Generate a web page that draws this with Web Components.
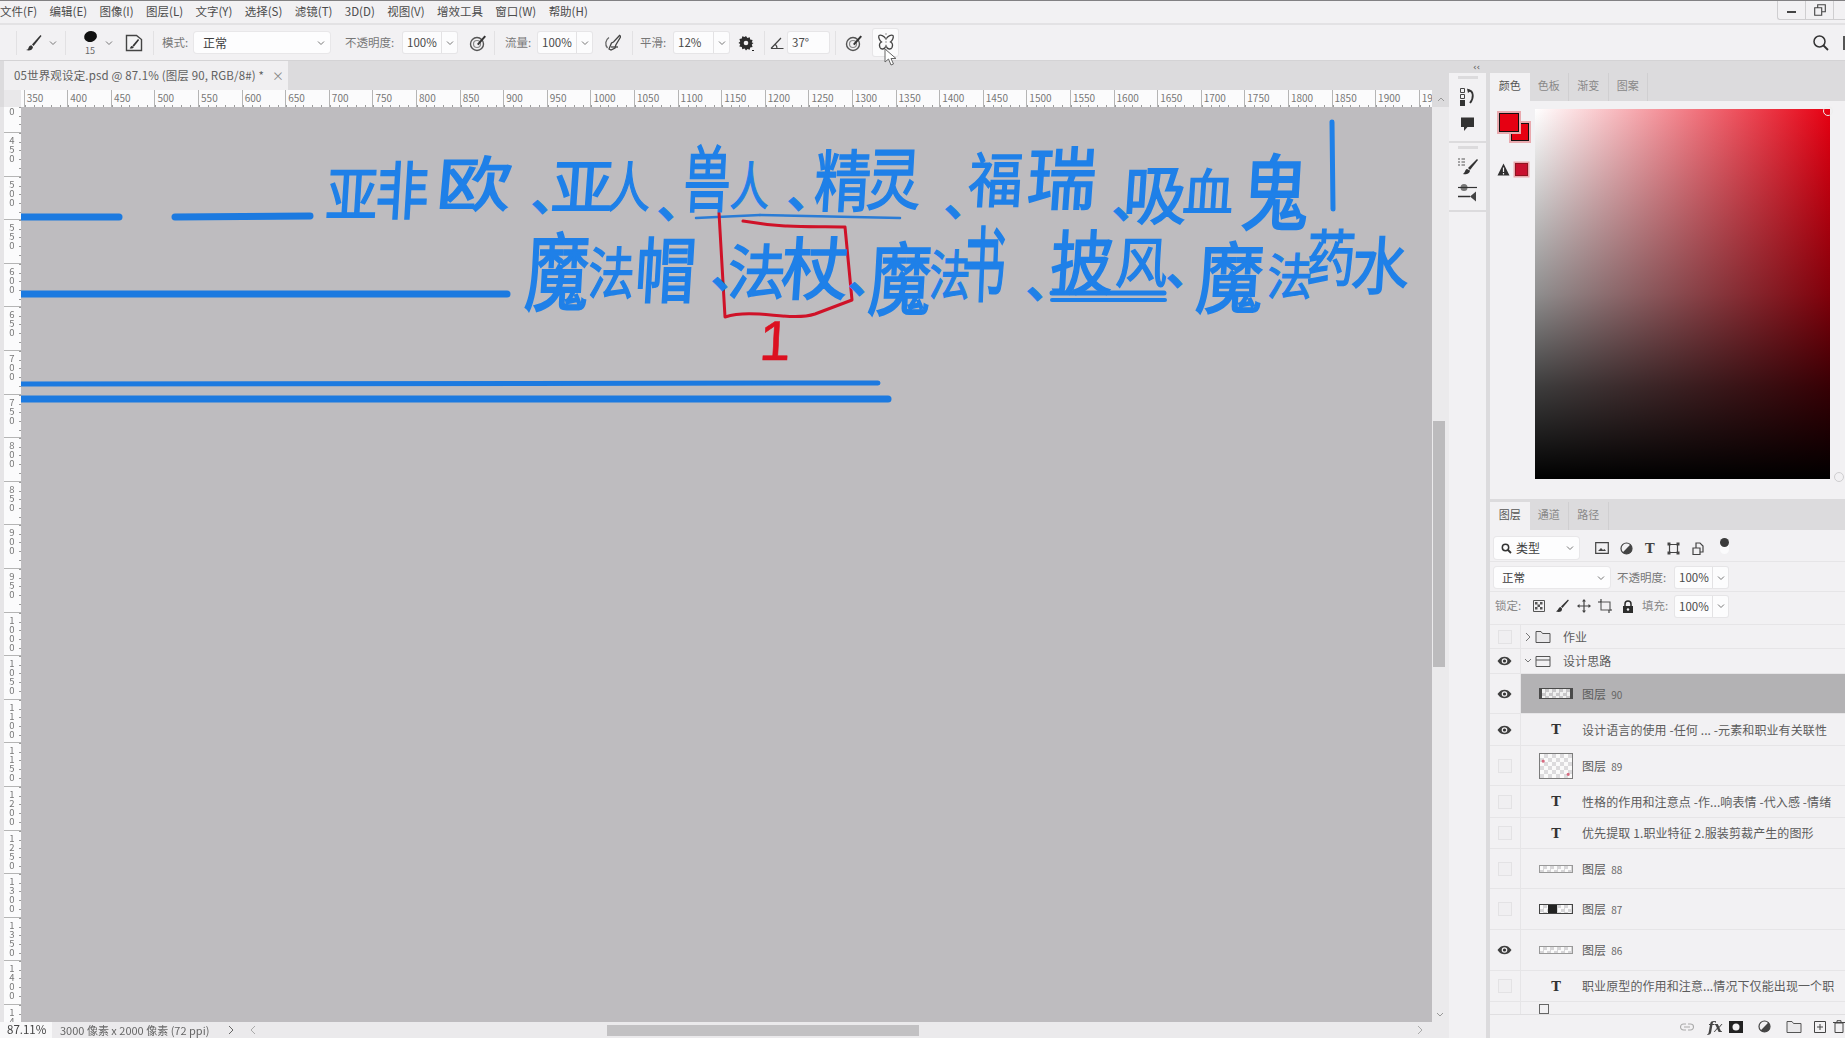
<!DOCTYPE html>
<html lang="zh">
<head>
<meta charset="utf-8">
<title>05世界观设定.psd</title>
<style>
  html, body { margin: 0; height: 100%; overflow: hidden; background: #f2f1f3; }
  body { font-family: "Noto Sans CJK SC", "Noto Sans", sans-serif; color: #555; }
</style>
</head>
<body>
<ps-app></ps-app>
<script>
/* ── shared bits ── */
const FONT = `"Noto Sans CJK SC", "Noto Sans", sans-serif`;
const svg = (w, h, body, extra = "") =>
	`<svg xmlns="http://www.w3.org/2000/svg" width="${w}" height="${h}" viewBox="0 0 ${w} ${h}" ${extra}>${body}</svg>`;

const ICONS = {
	chev: svg(8, 8, `<path d="M1 2.5 4 5.5 7 2.5" fill="none" stroke="#777" stroke-width="1"/>`),
	brush: svg(18, 18, `<path d="M16.5 1 8 10.5l1.6 1.6L17.5 2z" fill="#333"/><path d="M7.4 11.2c-2.4.2-2.6 2-3.1 3.2-.3.8-1.2 1.3-2.3 1.6 2.6 1 6.6.6 7-3z" fill="#333"/>`),
	preset: svg(18, 18, `<path d="M1.5 1.5h10l5 4v11h-15z" fill="#f4f4f5" stroke="#444" stroke-width="1.4"/><path d="M13 5 7.5 11.5l1.3 1.2L14.2 6z" fill="#333"/><path d="M7 12c-1.5.2-1.5 1.5-2.3 2.5 2 .2 4-.2 4-1.5z" fill="#333"/>`),
	pressure: svg(18, 18, `<circle cx="8" cy="10" r="6.5" fill="none" stroke="#555" stroke-width="1.4"/><circle cx="8" cy="10" r="3.5" fill="none" stroke="#888" stroke-width="1.2"/><path d="M8 10 15.5 1.5l1.5 1.2-7.5 8.5z" fill="#333"/>`),
	air: svg(18, 18, `<path d="M6 3.5A7 7 0 0 0 4.5 14" fill="none" stroke="#666" stroke-width="1.3"/><path d="M16.5 1.5 10.5 8l-2 1-2.500 6 2 1 4-2 .8-3 5-8.500z" fill="none" stroke="#444" stroke-width="1.3"/><path d="M8 13h7" stroke="#444" stroke-width="1.3"/>`),
	gear: svg(18, 18, `<path d="M9 2l1.4 2 2.3-.8.5 2.4 2.4.5-.8 2.300L16.5 9l-1.700 1.600.8 2.300-2.400.5-.5 2.400-2.300-.8L9 16.5l-1.400-2-2.300.8-.5-2.400-2.400-.5.8-2.300L1.500 9l1.700-1.600-.8-2.300 2.400-.5.5-2.400 2.300.8z" fill="#2c2c2c"/><circle cx="9" cy="9" r="2.3" fill="#f2f1f3"/><path d="M15 16.500h2" stroke="#222"/>`),
	angle: svg(14, 14, `<path d="M1 12.5h12.5M1 12.5 11 2M7 12.5c0-2-.8-3.400-2-4.500" fill="none" stroke="#444" stroke-width="1.2"/>`),
	butterfly: svg(18, 20, `<path d="M9 6C7 2.500 3.500 1.500 2 2.500c-1 1.500.5 5 2.500 6.500C2.500 10 2 12 3 14.500c1 2 4.500 2.500 6-1.500 1.500 4 5 3.500 6 1.500 1-2.500.5-4.500-1.500-5.500C15.500 7.500 17 4 16 2.500 14.500 1.500 11 2.500 9 6z" fill="none" stroke="#444" stroke-width="1.3"/><path d="M9 0v20" stroke="#9a9a9a" stroke-width="1" stroke-dasharray="2 2"/>`),
	search: svg(18, 18, `<circle cx="7.5" cy="7.5" r="5.5" fill="none" stroke="#333" stroke-width="1.5"/><path d="M11.5 11.5 16 16" stroke="#333" stroke-width="1.8"/>`),
	eye: svg(15, 10, `<path d="M.5 5C3 1.500 5 .7 7.500.7S12 1.500 14.500 5C12 8.500 10 9.300 7.500 9.300S3 8.500.5 5z" fill="#3f3f3f"/><circle cx="7.5" cy="5" r="2.8" fill="#f2f1f3"/><circle cx="7.5" cy="5" r="1.6" fill="#333"/>`),
	folder: svg(16, 13, `<path d="M1 1.500h5l1.500 2H15v9H1z" fill="#e9e8ea" stroke="#555" stroke-width="1"/>`),
	folderOpen: svg(16, 13, `<path d="M1 1.500h14v10H1zM1 5h14" fill="none" stroke="#555" stroke-width="1"/>`),
	history: svg(22, 22, `<path d="M3.500 1.500h4v4h-4zM3.500 7.500h4v4h-4z" fill="none" stroke="#444"/><path d="M3 13h5v6H3z" fill="#333"/><path d="M11 3c6 1 6 8 2 13" fill="none" stroke="#333" stroke-width="1.8"/><path d="M10 1.500 14 3.500 11 6z" fill="#333"/>`),
	comment: svg(16, 16, `<path d="M1 1.500h13v9.500H7.500L4 15v-4H1z" fill="#333"/>`),
	brushes: svg(22, 22, `<path d="M1 4h2M4.500 4H8M1 7h2M4.500 7H8M1 10h2M4.500 10H8" stroke="#555"/><path d="M20 4 11 13l2 2 8-10z" fill="#333"/><path d="M10 14c-2 .5-1.500 3-4 5 3 1 7-.5 7-3.500z" fill="#333"/>`),
	sliders: svg(22, 20, `<circle cx="7" cy="4.5" r="3.5" fill="#777"/><path d="M1 4.500h19" stroke="#333" stroke-width="1.2"/><path d="M1 13.500h12" stroke="#333" stroke-width="1.5"/><path d="M13 13.500l6-5v10z" fill="#444"/>`),
	warn: svg(13, 13, `<path d="M6.500.5 12.500 12.500H.5z" fill="#2f2f2f"/><path d="M6.500 4.500v4.500M6.500 10v1.400" stroke="#f2f1f3" stroke-width="1.2"/>`),
	glass: svg(11, 11, `<circle cx="4.5" cy="4.5" r="3.2" fill="none" stroke="#333" stroke-width="1.5"/><path d="M7 7l3 3" stroke="#333" stroke-width="1.8"/>`),
	fImage: svg(14, 12, `<path d="M.7.7h12.600v10.600H.7z" fill="none" stroke="#444" stroke-width="1.2"/><path d="M3 9l3-3 2 2 1.500-1L11 9z" fill="#444"/>`),
	fAdj: svg(13, 13, `<circle cx="6.5" cy="6.5" r="5.5" fill="none" stroke="#444" stroke-width="1.2"/><path d="M6.500 1a5.500 5.500 0 0 1 0 11z" fill="#444" transform="rotate(45 6.5 6.5)"/>`),
	fShape: svg(13, 13, `<path d="M2.500 2.500h8v8h-8z" fill="none" stroke="#444" stroke-width="1.2"/><path d="M.5.500h3v3h-3zM9.500.500h3v3h-3zM.5 9.500h3v3h-3zM9.500 9.500h3v3h-3z" fill="#444"/>`),
	fSmart: svg(12, 13, `<path d="M1 6h7v6.500H1z" fill="none" stroke="#444" stroke-width="1.2"/><path d="M4 6V1h4l3 3v6H8" fill="none" stroke="#444" stroke-width="1.2"/>`),
	lockPx: svg(12, 12, `<path d="M.5.500h11v11H.5z" fill="none" stroke="#555"/><path d="M2 2h2.500v2.500H2zM7 2h2.500v2.500H7zM4.500 4.500H7V7H4.500zM2 7h2.500v2.500H2zM7 7h2.500v2.500H7z" fill="#555"/>`),
	lockBrush: svg(14, 14, `<path d="M13 .5 6 7.500l1.400 1.400L13.800 1.500z" fill="#333"/><path d="M5.500 8c-2 .3-1.500 2.500-4.500 4.500 3 1 6.500.5 6-3z" fill="#333"/>`),
	lockMove: svg(14, 14, `<path d="M7 1v12M1 7h12" stroke="#444" stroke-width="1.2"/><path d="M7 0 5 2.500h4zM7 14l-2-2.500h4zM0 7l2.500-2v4zM14 7l-2.500-2v4z" fill="#444"/>`),
	lockArt: svg(14, 14, `<path d="M3 3h9v8H3z" fill="none" stroke="#555" stroke-width="1.1"/><path d="M0 3h3M12 11h2M3 0v3M11 11v3" stroke="#333" stroke-width="1.1"/>`),
	lock: svg(12, 13, `<path d="M3 6V4a3 3 0 0 1 6 0v2" fill="none" stroke="#2c2c2c" stroke-width="1.5"/><path d="M1 6h10v7H1z" fill="#2c2c2c"/><circle cx="6" cy="9.5" r="1.2" fill="#f2f1f3"/>`),
	link: svg(14, 8, `<path d="M6 1H3.500a3 3 0 0 0 0 6H6M8 1h2.500a3 3 0 0 1 0 6H8M4 4h6" fill="none" stroke="#aaa" stroke-width="1.1"/>`),
	mask: svg(14, 12, `<path d="M0 0h14v12H0z" fill="#222"/><circle cx="7" cy="6" r="3.5" fill="#f2f1f3"/>`),
	newLayer: svg(12, 12, `<path d="M.5.500h11v11H.5z" fill="none" stroke="#444"/><path d="M6 3v6M3 6h6" stroke="#444"/>`),
	trash: svg(12, 13, `<path d="M2 3h8v9.500H2zM0 2.500h12M4 2.500V.7h4v1.800" fill="none" stroke="#444"/>`),
	minus: svg(12, 10, `<path d="M1 7h9" stroke="#444" stroke-width="2"/>`),
	restore: svg(12, 12, `<path d="M.7 3.700h7v7.600h-7zM3.700 3.500V.7h7.600v7H8" fill="none" stroke="#444" stroke-width="1.1"/>`),
};

class PsBase extends HTMLElement {
	connectedCallback() {
		if (this.shadowRoot) return;
		const root = this.attachShadow({ mode: "open" });
		root.innerHTML = this.markup();
	}
	attr(name, dflt = "") {
		const v = this.getAttribute(name);
		return v === null ? dflt : v;
	}
}

/* ── top menu ── */
class PsMenubar extends PsBase {
	markup() {
		const items = ["文件(F)", "编辑(E)", "图像(I)", "图层(L)", "文字(Y)", "选择(S)", "滤镜(T)", "3D(D)", "视图(V)", "增效工具", "窗口(W)", "帮助(H)"];
		return `<style>
			:host { display: flex; align-items: center; box-sizing: border-box; height: 25px; gap: 12.4px;
				background: #f2f1f3; border-top: 1px solid #828183; border-bottom: 2px solid #e3e2e4;
				font: 11.5px/1 ${FONT}; color: #4b4b4b; position: relative; white-space: nowrap; }
			span:first-child { margin-left: -2px; }
			.win { margin-left: auto; display: flex; height: 18px; align-self: flex-start; border: 1px solid #cfced0; border-top: 0; border-right: 0; border-radius: 0 0 0 3px; }
			.win i { display: flex; width: 27px; align-items: center; justify-content: center; border-right: 1px solid #cfced0; }
			.win i:last-child { width: 11px; border-right: 0; }
		</style>${items.map(t => `<span>${t}</span>`).join("")}
		<div class="win"><i>${ICONS.minus}</i><i>${ICONS.restore}</i><i></i></div>`;
	}
}

class PsField extends PsBase {
	markup() {
		const chev = this.hasAttribute("chev");
		return `<style>
			:host { display: flex; box-sizing: border-box; height: 21px; background: #fcfcfd; border-radius: 2px;
				box-shadow: 0 0 0 1px #e6e5e7; font: 11.5px/21px ${FONT}; color: #4a4a4a; overflow: hidden; }
			.v { flex: 1; padding-left: 4px; white-space: nowrap; }
			.c { width: 15px; display: flex; align-items: center; justify-content: center; border-left: 1px solid #e3e2e4; }
		</style><div class="v"><slot></slot></div>${chev ? `<div class="c">${ICONS.chev}</div>` : ""}`;
	}
}

class PsSelect extends PsBase {
	markup() {
		return `<style>
			:host { display: flex; align-items: center; box-sizing: border-box; background: #fdfdfe; border-radius: 3px;
				box-shadow: 0 0 0 1px #e8e7e9; font: 12px/1 ${FONT}; color: #3e3e3e; padding: 0 5px 0 9px; white-space: nowrap; }
			.v { flex: 1; display: flex; align-items: center; gap: 4px; }
		</style><div class="v"><slot></slot></div>${ICONS.chev}`;
	}
}

/* ── options bar ── */
class PsOptions extends PsBase {
	markup() {
		return `<style>
			:host { display: flex; align-items: center; box-sizing: border-box; height: 36px; background: #f2f1f3;
				border-bottom: 1px solid #d4d3d5; font: 11.5px/1 ${FONT}; color: #777; white-space: nowrap; }
			.sep { width: 1px; height: 24px; background: #e2e1e3; flex: none; }
			.ic { display: flex; flex: none; }
			.lb { flex: none; }
			.tip { flex: none; width: 18px; margin-left: 15px; display: flex; flex-direction: column; align-items: center; color: #666; font-size: 9px; }
			.dot { width: 13px; height: 11px; border-radius: 50%; background: #111; transform: rotate(-18deg); margin-bottom: 4px; }
			.btn { flex: none; width: 25px; height: 27px; margin-left: 10px; display: flex; align-items: center; justify-content: center; background: #fbfbfc; box-shadow: 0 0 0 1px #e6e5e7; border-radius: 2px; }
		</style>
		<span class="sep" style="margin-left:16px"></span>
		<span class="ic" style="margin-left:7px">${ICONS.brush}</span>
		<span class="ic" style="margin-left:7px">${ICONS.chev}</span>
		<span class="sep" style="margin-left:8px"></span>
		<div class="tip"><div class="dot"></div>15</div>
		<span class="ic" style="margin-left:6px">${ICONS.chev}</span>
		<span class="ic" style="margin-left:12px">${ICONS.preset}</span>
		<span class="sep" style="margin-left:10px"></span>
		<span class="lb" style="margin-left:8px;width:29px">模式:</span>
		<ps-select style="margin-left:3px;width:136px;height:21px">正常</ps-select>
		<span class="lb" style="margin-left:15px;width:54px">不透明度:</span>
		<ps-field chev style="margin-left:4px;width:54px">100%</ps-field>
		<span class="ic" style="margin-left:12px">${ICONS.pressure}</span>
		<span class="sep" style="margin-left:7px"></span>
		<span class="lb" style="margin-left:10px;width:30px">流量:</span>
		<ps-field chev style="margin-left:3px;width:54px">100%</ps-field>
		<span class="ic" style="margin-left:11px">${ICONS.air}</span>
		<span class="sep" style="margin-left:11px"></span>
		<span class="lb" style="margin-left:7px;width:31px">平滑:</span>
		<ps-field chev style="margin-left:3px;width:55px">12%</ps-field>
		<span class="ic" style="margin-left:8px">${ICONS.gear}</span>
		<span class="sep" style="margin-left:9px"></span>
		<span class="ic" style="margin-left:5px">${ICONS.angle}</span>
		<ps-field style="margin-left:4px;width:41px">37°</ps-field>
		<span class="sep" style="margin-left:6px"></span>
		<span class="ic" style="margin-left:9px">${ICONS.pressure}</span>
		<div class="btn">${ICONS.butterfly}</div>
		<span class="ic" style="margin-left:auto">${ICONS.search}</span>
		<span class="sep" style="margin:0 0 0 13px;height:14px;width:2px;background:#555"></span>
		`;
	}
}

/* ── document tab ── */
class PsDocTab extends PsBase {
	markup() {
		return `<style>
			:host { display: flex; box-sizing: border-box; height: 29px; padding-left: 4px; background: #dcdbdd; font: 11.5px/1 ${FONT}; color: #5f5f5f; white-space: nowrap; letter-spacing: .15px; }
			.t { width: 284px; box-sizing: border-box; padding-left: 10px; display: flex; align-items: center; background: #f0eff1; }
			.x { margin-left: 8px; color: #888; font-size: 12px; }
		</style><div class="t"><slot></slot><span class="x">×</span></div>`;
	}
}

/* ── rulers ── */
const TICKS_H = `repeating-linear-gradient(90deg, #9b9b9b 0 1px, transparent 1px 8.72px) bottom left / 100% 2px no-repeat`;
class PsRulerH extends PsBase {
	markup() {
		let cells = "";
		for (let n = 350; n <= 1950; n += 50) cells += `<div class="c"><span>${n}</span></div>`;
		return `<style>
			:host { display: flex; box-sizing: border-box; height: 17px; background: #dcdbdd; padding-left: 4px; font: 10px/1 ${FONT}; color: #777; }
			.corner { flex: 0 0 17px; background: #e9e8ea; }
			.r { flex: 0 0 1411px; display: flex; overflow: hidden; background: #fbfbfc; padding-left: 2.7px; box-sizing: border-box; }
			.c { flex: 0 0 43.6px; box-sizing: border-box; border-left: 1px solid #b5b5b5; padding: 3px 0 0 2px; background: ${TICKS_H}; overflow: hidden; }
			.arrow { flex: 1; display: flex; align-items: center; justify-content: center; }
		</style><div class="corner"></div><div class="r">${cells}</div>
		<div class="arrow">${svg(8, 6, `<path d="M1 5 4 2l3 3" fill="none" stroke="#999"/>`)}</div>`;
	}
}

const TICKS_V = `repeating-linear-gradient(180deg, #9b9b9b 0 1px, transparent 1px 8.72px) top right / 2px 100% no-repeat`;
class PsRulerV extends PsBase {
	markup() {
		let cells = `<div class="c" style="flex-basis:25px"><b>0</b></div>`;
		for (let n = 450; n <= 1450; n += 50) cells += `<div class="c"><b>${n}</b></div>`;
		return `<style>
			:host { display: block; box-sizing: border-box; width: 21px; flex: none; background: #e6e5e7; padding-left: 4px; overflow: hidden; }
			.r { display: flex; flex-direction: column; height: 100%; background: #fbfbfc; font: 9.5px/9px ${FONT}; color: #777; overflow: hidden; }
			.c { flex: 0 0 43.6px; box-sizing: border-box; border-top: 1px solid #b5b5b5; padding: 3px 4px 0 5px; background: ${TICKS_V}; overflow: hidden; }
			.c:first-child { border-top: 0; padding-top: 0; }
			/* one digit per line: a box too thin for two */
			b { display: block; font-weight: 400; width: 6px; word-break: break-all; text-align: center; }
		</style><div class="r">${cells}</div>`;
	}
}

/* ── painted strokes on the canvas ── */
const INK = [
	// first line
	["亚", 329, 377, 163, 217], ["非", 379, 428, 157, 215], ["欧", 441, 510, 152, 207],
	["亚", 555, 612, 155, 210], ["人", 610, 650, 158, 208],
	["兽", 687, 730, 140, 207], ["人", 733, 769, 158, 206],
	["精", 818, 870, 145, 207], ["灵", 870, 920, 143, 205],
	["福", 972, 1022, 148, 203], ["瑞", 1031, 1095, 142, 205],
	["吸", 1127, 1186, 160, 220], ["血", 1186, 1233, 165, 212], ["鬼", 1245, 1308, 148, 225],
	// second line
	["魔", 529, 588, 226, 305], ["法", 591, 634, 243, 295], ["帽", 639, 695, 232, 298],
	["法", 731, 785, 240, 295], ["杖", 785, 847, 232, 295],
	["魔", 872, 930, 236, 310], ["法", 932, 970, 246, 296], ["书", 965, 1005, 220, 296],
	["披", 1054, 1112, 225, 290], ["风", 1119, 1167, 233, 284],
	["魔", 1200, 1262, 236, 308], ["法", 1270, 1312, 250, 296], ["药", 1310, 1355, 225, 282], ["水", 1355, 1408, 232, 290],
];
const COMMAS = [[534, 198], [660, 205], [790, 195], [947, 203], [1115, 205], [714, 275], [851, 280], [1029, 285], [1169, 272]];

class PsCanvas extends PsBase {
	markup() {
		const ox = 21, oy = 107;
		const blue = "#1f80e8";
		const line = (x1, y1, x2, y2, w, c = "#1c7ae0") =>
			`<path d="M${x1 - ox} ${y1 - oy}L${x2 - ox} ${y2 - oy}" stroke="${c}" stroke-width="${w}" stroke-linecap="round"/>`;
		const ink = INK.map(([ch, x0, x1, y0, y1]) => {
			const sx = ((x1 - x0) / 37).toFixed(3);
			const sy = ((y1 - y0) / 37).toFixed(3);
			return `<span style="left:${x0 - ox}px;top:${y0 - oy}px;transform:scale(${sx},${sy}) skewX(-4deg)">${ch}</span>`;
		}).join("");
		const commas = COMMAS.map(([x, y]) =>
			`<span class="cm" style="left:${x - ox - 3}px;top:${y - oy - 28}px">、</span>`).join("");
		return `<style>
			:host { display: block; position: relative; flex: 1; background: #bebcbf; overflow: hidden; }
			svg { position: absolute; left: 0; top: 0; }
			span { position: absolute; transform-origin: 0 0; font: 400 40px/40px ${FONT}; -webkit-text-stroke: 1px ${blue}; color: ${blue}; width: 40px; height: 40px; margin: -1.5px 0 0 -1.5px; white-space: nowrap; }
			span.cm { margin: 0; font: 700 44px/44px ${FONT}; }
			span.one { font: 400 56px/56px "Liberation Sans", sans-serif; color: #dc1020; -webkit-text-stroke: .6px #dc1020; margin: 0; width: 30px; height: 56px; transform: skewX(-3deg); }
		</style>
		${svg(1411, 915, `
			${line(21, 217, 119, 217, 7)}
			${line(175, 217, 310, 216, 7)}
			${line(21, 294, 507, 294, 7)}
			${line(21, 384, 878, 383, 5)}
			${line(21, 399, 888, 399, 7)}
			${line(696, 218, 760, 215, 2.5, "#2a7cd6")}
			${line(760, 215, 900, 218, 2.5, "#2a7cd6")}
			${line(1052, 293, 1164, 293, 5, blue)}
			${line(1052, 300, 1165, 300, 4, blue)}
			${line(1332, 122, 1333, 209, 5, blue)}
			<path d="M${719 - ox} ${213 - oy}L${725 - ox} ${317 - oy}C${755 - ox} ${308 - oy} ${790 - ox} ${322 - oy} ${815 - ox} ${314 - oy}L${852 - ox} ${300 - oy}L${845 - ox} ${227 - oy}C${815 - ox} ${226 - oy} ${790 - ox} ${229 - oy} ${743 - ox} ${221 - oy}" fill="none" stroke="#cf1228" stroke-width="3" stroke-linejoin="round" stroke-linecap="round"/>
		`)}
		${ink}${commas}
		<span class="one" style="left:${761 - ox}px;top:${313 - oy}px">1</span>`;
	}
}

class PsScrollV extends PsBase {
	markup() {
		return `<style>
			:host { display: flex; flex-direction: column; justify-content: flex-end; position: relative; flex: 0 0 17px; box-sizing: border-box; background: #ebeaec; padding: 0 0 4px 4px; }
			.thumb { position: absolute; left: 1px; width: 12px; top: 314px; height: 246px; background: #bcbbbd; }
		</style><div class="thumb"></div>${svg(8, 6, `<path d="M1 1l3 3 3-3" fill="none" stroke="#999"/>`)}`;
	}
}

class PsStatus extends PsBase {
	markup() {
		return `<style>
			:host { display: flex; align-items: center; box-sizing: border-box; height: 16px; background: #ebeaec; font: 11.5px/1 ${FONT}; color: #666; white-space: nowrap; }
			.z { width: 52px; height: 100%; box-sizing: border-box; padding-left: 7px; background: #f8f8f9; color: #444; display: flex; align-items: center; }
			.d { margin-left: 8px; width: 167px; font-size: 11px; }
			.track { flex: 1; display: flex; align-items: center; height: 100%; margin-left: 4px; position: relative; }
			.th { position: absolute; left: 368px; width: 312px; top: 3px; height: 11px; background: #c2c1c3; }
			.r { margin-left: auto; margin-right: 25px; display: flex; }
		</style><div class="z">87.11%</div><div class="d">3000 像素 x 2000 像素 (72 ppi)</div>
		${svg(8, 10, `<path d="M2 1l4 4-4 4" fill="none" stroke="#666"/>`)}
		<div class="track"><span style="margin-left:10px;display:flex">${svg(8, 10, `<path d="M6 1 2 5l4 4" fill="none" stroke="#aaa"/>`)}</span><div class="th"></div>
		<span class="r">${svg(8, 10, `<path d="M2 1l4 4-4 4" fill="none" stroke="#aaa"/>`)}</span></div>`;
	}
}

/* ── tool dock, collapsed ── */
class PsDock extends PsBase {
	markup() {
		const grip = `<i class="g"></i>`;
		return `<style>
			:host { display: flex; flex-direction: column; flex: 0 0 37px; background: #dcdbdd; }
			.s { background: #f2f1f3; display: flex; flex-direction: column; align-items: center; margin-bottom: 2px; }
			.g { width: 20px; height: 3px; background: #dcdbdd; margin-top: 3px; }
			.s1 { height: 68px; } .s2 { height: 67px; }
			.s3 { flex: 1; margin: 0; }
			.a { display: flex; }
		</style>
		<div class="s s1">${grip}<span class="a" style="margin-top:8px">${ICONS.history}</span><span class="a" style="margin-top:7px">${ICONS.comment}</span></div>
		<div class="s s2">${grip}<span class="a" style="margin-top:6px">${ICONS.brushes}</span><span class="a" style="margin-top:6px">${ICONS.sliders}</span></div>
		<div class="s s3"></div>`;
	}
}

class PsTabs extends PsBase {
	markup() {
		const active = +this.attr("active", "0");
		const names = this.attr("names").split(",");
		return `<style>
			:host { display: flex; box-sizing: border-box; height: 28px; flex: none; background: #dcdbdd; font: 11px/1 ${FONT}; color: #888; }
			div { width: 39.5px; display: flex; align-items: center; justify-content: center; border-right: 1px solid #d0cfd1; box-sizing: border-box; padding-bottom: 3px; }
			.on { background: #f2f1f3; color: #555; border-right: 0; }
		</style>${names.map((n, i) => `<div class="${i === active ? "on" : ""}">${n}</div>`).join("")}`;
	}
}

/* ── colour panel ── */
class PsColorPanel extends PsBase {
	markup() {
		return `<style>
			:host { display: flex; flex-direction: column; height: 429px; flex: none; box-sizing: border-box; background: #f2f1f3; border-bottom: 3px solid #dcdbdd; position: relative; }
			.b { flex: 1; display: flex; padding-top: 8px; }
			.l { flex: 0 0 45px; position: relative; }
			.fg, .bg { position: absolute; width: 16px; height: 16px; background: #e60012; box-shadow: 0 0 0 1px #111, 0 0 0 3px #e9a9ae; }
			.fg { left: 10px; top: 5px; width: 18px; height: 17px; z-index: 1; }
			.bg { left: 22px; top: 15px; }
			.w { position: absolute; left: 7px; top: 54px; display: flex; align-items: center; gap: 4px; }
			.w i { width: 11px; height: 11px; background: #c8102e; box-shadow: 0 0 0 1px #8e1420, 0 0 0 2.5px #e9a9ae; margin-left: 2px; }
			.f { width: 295px; height: 370px; position: relative; background:
				linear-gradient(180deg, rgba(0,0,0,0), rgba(0,0,0,.44) 50%, rgba(0,0,0,.76) 75%, #000),
				linear-gradient(90deg, #fff, #e60012); }
			.k { position: absolute; right: -3px; top: -3px; width: 8px; height: 8px; border: 1px solid #eee; border-radius: 50%; }
			.hue { position: absolute; left: 344px; top: 399px; width: 8px; height: 8px; border: 1px solid #cfced0; border-radius: 50%; }
		</style>
		<ps-tabs names="颜色,色板,渐变,图案" active="0"></ps-tabs>
		<div class="b">
			<div class="l"><div class="fg"></div><div class="bg"></div><div class="w">${ICONS.warn}<i></i></div></div>
			<div class="f"><div class="k"></div></div>
		</div>
		<div class="hue"></div>`;
	}
}

/* ── layers ── */
class PsLayerRow extends PsBase {
	markup() {
		const h = +this.attr("h", "40");
		const kind = this.attr("kind", "layer");
		const num = this.attr("num");
		const eye = this.hasAttribute("eye");
		const sel = this.hasAttribute("selected");
		const vis = eye ? ICONS.eye : (this.hasAttribute("novis") ? "" : `<i class="box"></i>`);
		let lead = "";
		if (kind === "text") lead = `<b class="T">T</b>`;
		if (kind === "layer") lead = `<i class="th ${this.attr("thumb")}"></i>`;
		if (kind === "group") {
			const open = this.hasAttribute("open");
			lead = `<span class="gc">${svg(8, 10, open ? `<path d="M1 3l3 3 3-3" fill="none" stroke="#777"/>` : `<path d="M2 1l4 4-4 4" fill="none" stroke="#777"/>`)}</span>
				<span class="gf">${open ? ICONS.folderOpen : ICONS.folder}</span>`;
		}
		return `<style>
			:host { display: flex; box-sizing: border-box; height: ${h}px; border-bottom: 1px solid #e6e5e7; font: 12px/1 ${FONT}; color: #5c5c5c; white-space: nowrap; overflow: hidden; }
			.vis { flex: 0 0 31px; display: flex; align-items: center; justify-content: center; box-sizing: border-box; border-right: 1px solid #e6e5e7; padding-right: 1px; }
			.box { width: 12px; height: 12px; background: #f0eff1; box-shadow: 0 0 0 1px #e3e2e4; }
			.m { flex: 1; display: flex; align-items: center; padding-left: ${kind === "group" ? 3 : 18}px; min-width: 0; ${sel ? "background:#b3b2b4;" : ""} }
			.T { width: 34px; text-align: center; font: 700 13px/1 "DejaVu Serif", "Liberation Serif", serif; color: #333; }
			.gc { display: flex; width: 11px; } .gf { display: flex; width: 28px; }
			.n { margin-left: ${kind === "group" ? 0 : 9}px; overflow: hidden; letter-spacing: .1px; }
			.num { font-size: 10px; color: #666; margin-left: 5px; }
			.th { box-sizing: border-box; width: 34px; height: 11px; border: 1px solid #7c7c7c; flex: none;
				background: repeating-conic-gradient(#d7d6d8 0 25%, #fafafa 0 50%) 0 0 / 7px 7px; }
			.tall { height: 26px; background: radial-gradient(circle at 10% 30%, #d76a80 0 1px, transparent 2px), radial-gradient(circle at 88% 85%, #d76a80 0 1px, transparent 2px), repeating-conic-gradient(#dcdbdd 0 25%, #fafafa 0 50%) 0 0 / 8px 8px; }
			.sel { height: 11px; border-width: 1px 3px; border-color: #4a4a4a; background: repeating-conic-gradient(#c8c7c9 0 25%, #f0f0f0 0 50%) 0 0 / 7px 7px; }
			.faint { height: 8px; border-color: #999; }
			.dark { height: 10px; border: 1px solid #444; background: linear-gradient(#222, #222) 35% 50% / 9px 100% no-repeat, repeating-conic-gradient(#d7d6d8 0 25%, #fafafa 0 50%) 0 0 / 7px 7px; }
			.smart { width: 10px; height: 10px; border-color: #666; background: #f2f1f3; }
		</style><div class="vis">${vis}</div><div class="m">${lead}<span class="n"><slot></slot>${num ? `<span class="num">${num}</span>` : ""}</span></div>`;
	}
}

class PsLayersPanel extends PsBase {
	markup() {
		return `<style>
			:host { display: flex; flex-direction: column; flex: 1; min-height: 0; background: #f2f1f3; font: 11.5px/1 ${FONT}; color: #777; position: relative; overflow: hidden; }
			.row { display: flex; align-items: center; box-sizing: border-box; padding-left: 4px; white-space: nowrap; flex: none; border-bottom: 1px solid #e6e5e7; }
			.ic { display: flex; flex: none; }
			.tog { position: relative; width: 9px; height: 16px; border-radius: 5px; background: #fbfbfc; margin-left: 16px; margin-top: -4px; }
			.tog i { position: absolute; left: 0; top: 0; width: 9px; height: 9px; border-radius: 50%; background: #3c3c3c; }
			.list { flex: 1; min-height: 0; overflow: hidden; }
			.foot { position: absolute; left: 0; right: 0; bottom: 0; height: 24px; background: #f2f1f3; border-top: 1px solid #e0dfe1; display: flex; align-items: center; padding-left: 190px; box-sizing: border-box; }
			.fx { font: italic 700 14px/1 "DejaVu Serif", serif; color: #444; margin-left: 14px; width: 18px; }
		</style>
		<ps-tabs names="图层,通道,路径" active="0"></ps-tabs>
		<div class="row" style="height:32px;padding-top:5px">
			<ps-select style="width:85px;height:22px;padding-left:7px">${ICONS.glass}类型</ps-select>
			<span class="ic" style="margin-left:16px">${ICONS.fImage}</span>
			<span class="ic" style="margin-left:11px">${ICONS.fAdj}</span>
			<b class="ic" style="margin-left:12px;font:700 13px/1 'DejaVu Serif',serif;color:#444">T</b>
			<span class="ic" style="margin-left:12px">${ICONS.fShape}</span>
			<span class="ic" style="margin-left:12px">${ICONS.fSmart}</span>
			<div class="tog"><i></i></div>
		</div>
		<div class="row" style="height:30px;padding-top:2px">
			<ps-select style="width:116px;height:21px;padding-left:8px;font-size:11.5px">正常</ps-select>
			<span style="margin-left:7px;width:58px;flex:none">不透明度:</span>
			<ps-field chev style="width:53px">100%</ps-field>
		</div>
		<div class="row" style="height:33px;padding:0 0 4px 5px">
			<span style="width:38px;flex:none;color:#888">锁定:</span>
			<span class="ic">${ICONS.lockPx}</span>
			<span class="ic" style="margin-left:10px">${ICONS.lockBrush}</span>
			<span class="ic" style="margin-left:8px">${ICONS.lockMove}</span>
			<span class="ic" style="margin-left:7px">${ICONS.lockArt}</span>
			<span class="ic" style="margin-left:10px">${ICONS.lock}</span>
			<span style="margin-left:8px;width:31px;flex:none;color:#888">填充:</span>
			<ps-field chev style="margin-left:2px;width:53px">100%</ps-field>
		</div>
		<div class="list">
			<ps-layer-row kind="group" h="24">作业</ps-layer-row>
			<ps-layer-row kind="group" h="25" eye open>设计思路</ps-layer-row>
			<ps-layer-row kind="layer" h="40" eye selected thumb="sel" num="90">图层</ps-layer-row>
			<ps-layer-row kind="text" h="32" eye>设计语言的使用 -任何 ... -元素和职业有关联性</ps-layer-row>
			<ps-layer-row kind="layer" h="40" thumb="tall" num="89">图层</ps-layer-row>
			<ps-layer-row kind="text" h="32">性格的作用和注意点 -作...响表情 -代入感 -情绪</ps-layer-row>
			<ps-layer-row kind="text" h="31">优先提取 1.职业特征 2.服装剪裁产生的图形</ps-layer-row>
			<ps-layer-row kind="layer" h="40" thumb="faint" num="88">图层</ps-layer-row>
			<ps-layer-row kind="layer" h="41" thumb="dark" num="87">图层</ps-layer-row>
			<ps-layer-row kind="layer" h="41" eye thumb="faint" num="86">图层</ps-layer-row>
			<ps-layer-row kind="text" h="31">职业原型的作用和注意...情况下仅能出现一个职</ps-layer-row>
			<ps-layer-row kind="layer" h="14" novis thumb="smart"></ps-layer-row>
		</div>
		<div class="foot">
			<span class="ic">${ICONS.link}</span>
			<span class="fx">fx</span>
			<span class="ic" style="margin-left:7px">${ICONS.mask}</span>
			<span class="ic" style="margin-left:15px">${ICONS.fAdj}</span>
			<span class="ic" style="margin-left:15px">${ICONS.folder}</span>
			<span class="ic" style="margin-left:12px">${ICONS.newLayer}</span>
			<span class="ic" style="margin-left:7px">${ICONS.trash}</span>
		</div>`;
	}
}

/* ── whole window ── */
class PsApp extends PsBase {
	markup() {
		return `<style>
			:host { display: flex; flex-direction: column; width: 1845px; height: 1038px; position: relative; overflow: hidden; filter: blur(.35px); }
			.main { flex: 1; display: flex; min-height: 0; }
			.doc { flex: 0 0 1449px; display: flex; flex-direction: column; min-width: 0; }
			.work { flex: 1; display: flex; min-height: 0; }
			.side { flex: 1; display: flex; flex-direction: column; background: #dcdbdd; min-width: 0; }
			.strip { height: 12px; flex: none; display: flex; align-items: center; padding-left: 24px; color: #555; font: 9px/1 "DejaVu Sans", sans-serif; }
			.cols { flex: 1; display: flex; min-height: 0; }
			.panels { flex: 1; margin-left: 4px; display: flex; flex-direction: column; min-width: 0; }
			.cursor { position: absolute; left: 884px; top: 47px; }
		</style>
		<ps-menubar></ps-menubar>
		<ps-options></ps-options>
		<div class="main">
			<div class="doc">
				<ps-doc-tab>05世界观设定.psd @ 87.1% (图层 90, RGB/8#) *</ps-doc-tab>
				<ps-ruler-h></ps-ruler-h>
				<div class="work"><ps-ruler-v></ps-ruler-v><ps-canvas></ps-canvas><ps-scroll-v></ps-scroll-v></div>
				<ps-status></ps-status>
			</div>
			<div class="side">
				<div class="strip">‹‹</div>
				<div class="cols">
					<ps-dock></ps-dock>
					<div class="panels"><ps-color-panel></ps-color-panel><ps-layers-panel></ps-layers-panel></div>
				</div>
			</div>
		</div>
		<div class="cursor">${svg(14, 18, `<path d="M1 1v13l3.5-3 2.5 6 2.5-1-2.5-5.5H12z" fill="#fff" stroke="#666" stroke-width="1"/>`)}</div>`;
	}
}

customElements.define("ps-menubar", PsMenubar);
customElements.define("ps-field", PsField);
customElements.define("ps-select", PsSelect);
customElements.define("ps-options", PsOptions);
customElements.define("ps-doc-tab", PsDocTab);
customElements.define("ps-ruler-h", PsRulerH);
customElements.define("ps-ruler-v", PsRulerV);
customElements.define("ps-canvas", PsCanvas);
customElements.define("ps-scroll-v", PsScrollV);
customElements.define("ps-status", PsStatus);
customElements.define("ps-dock", PsDock);
customElements.define("ps-tabs", PsTabs);
customElements.define("ps-color-panel", PsColorPanel);
customElements.define("ps-layer-row", PsLayerRow);
customElements.define("ps-layers-panel", PsLayersPanel);
customElements.define("ps-app", PsApp);
</script>
</body>
</html>
